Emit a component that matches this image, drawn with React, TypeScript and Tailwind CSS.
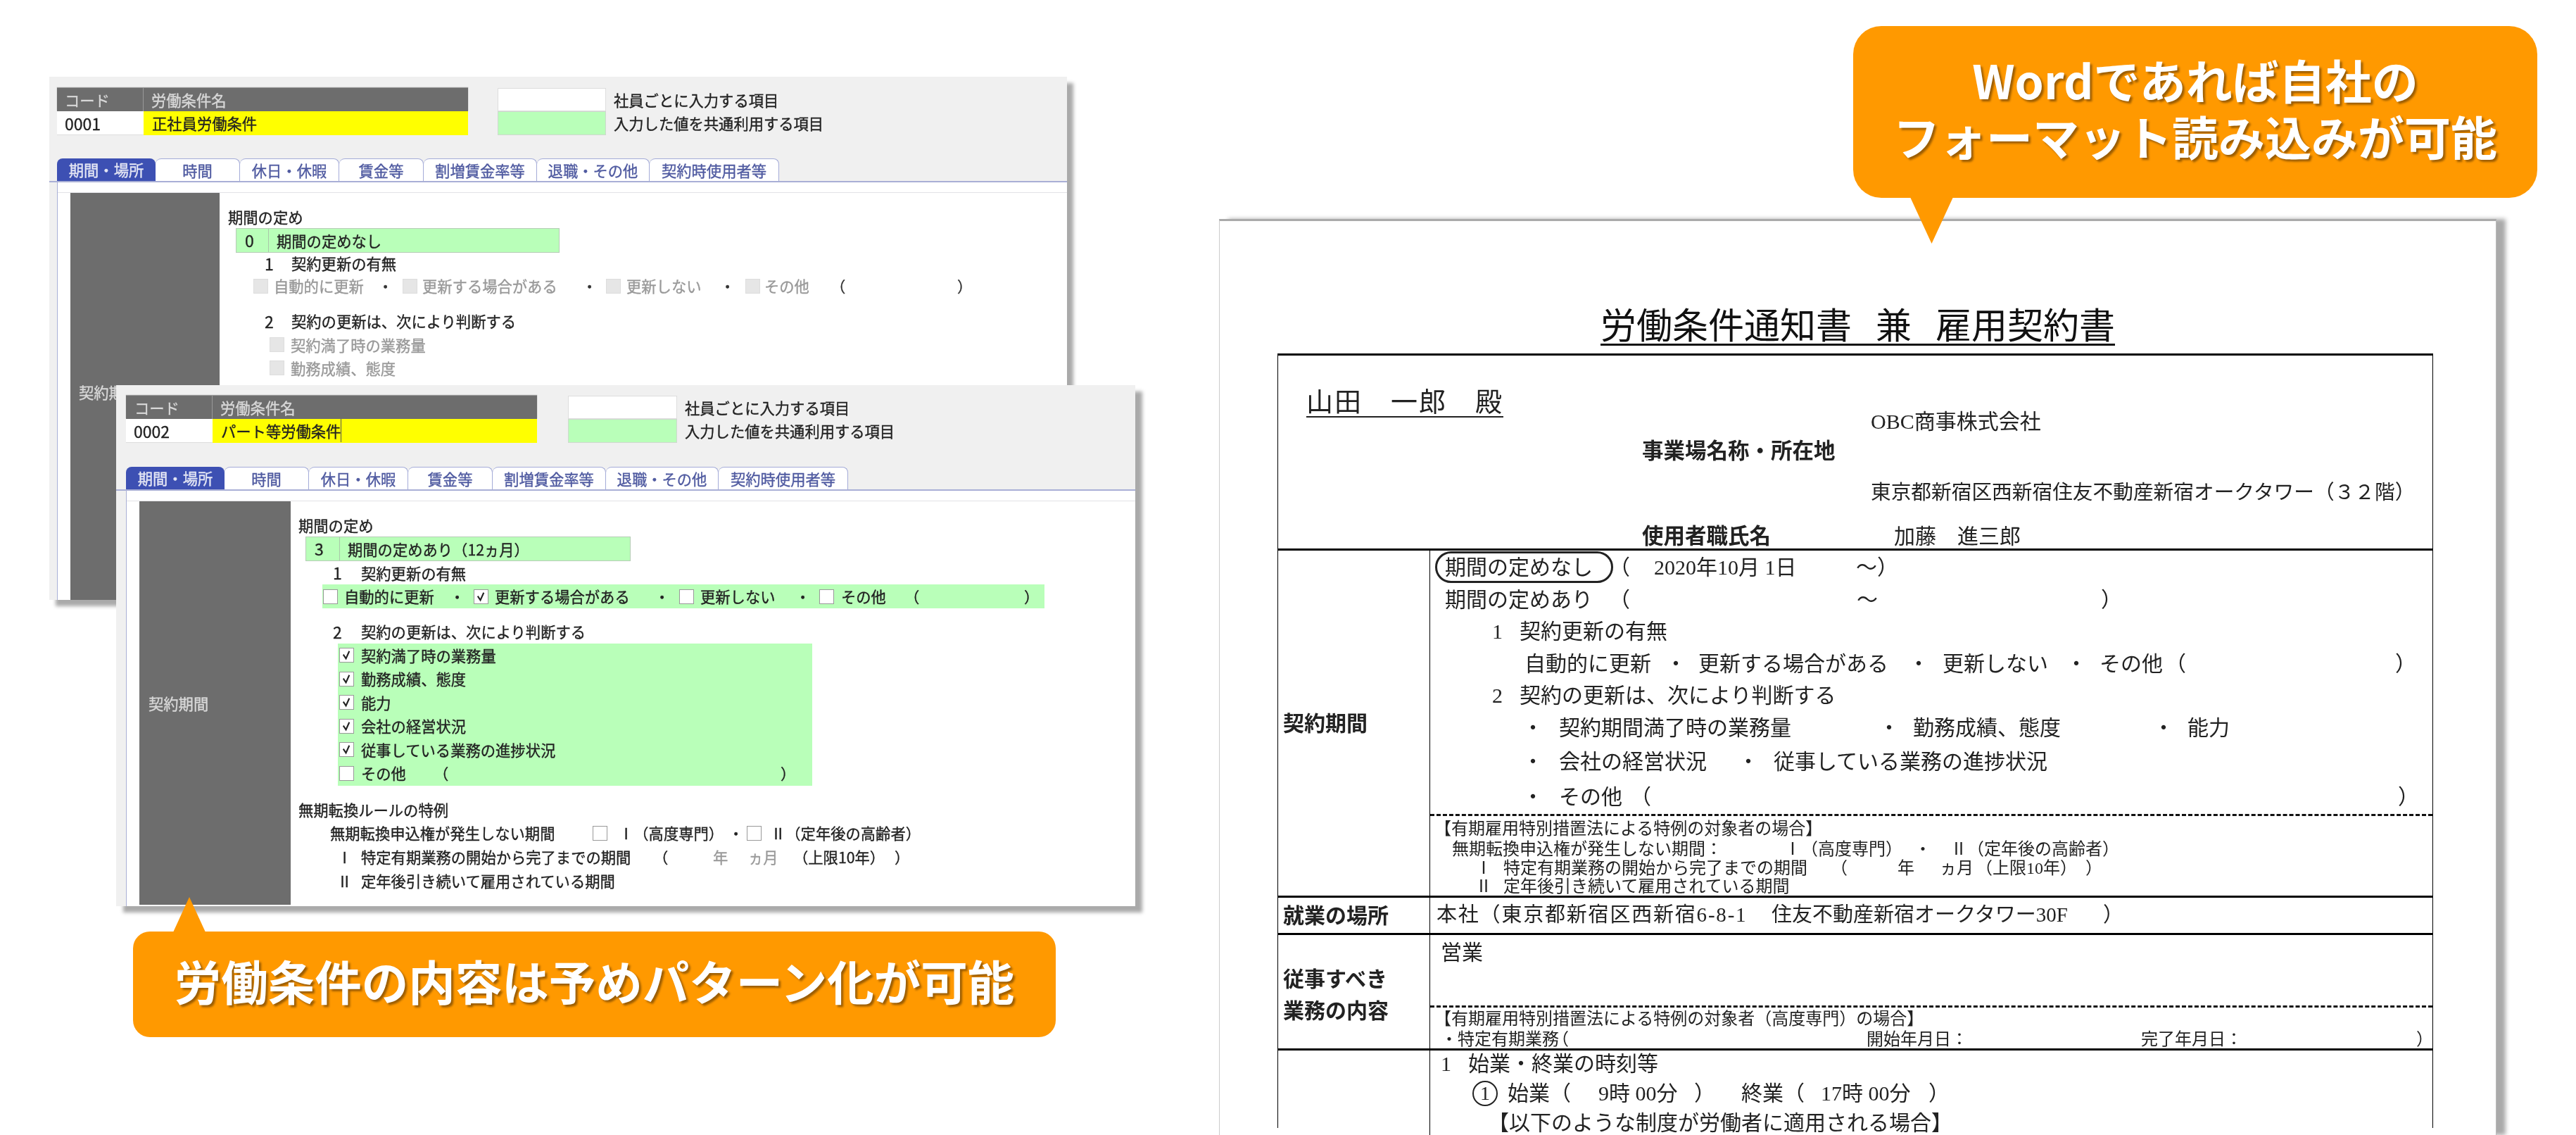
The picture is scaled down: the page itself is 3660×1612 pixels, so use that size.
import React from "react";

const ui = "[font-family:'Noto_Sans_CJK_JP',sans-serif]";
const mincho = "[font-family:'Liberation_Serif','Noto_Sans_CJK_JP',serif]";
const line = "flex items-center whitespace-nowrap [&>span]:shrink-0";

function Cb({ checked, disabled }: { checked?: boolean; disabled?: boolean }) {
  return (
    <span
      className={
        disabled
          ? "w-[21px] h-[21px] bg-[#e6e6e6] border border-[#dddddd] shrink-0"
          : "w-[21px] h-[21px] bg-white border border-[#999999] shrink-0 flex items-center justify-center"
      }
    >
      {checked && (
        <svg viewBox="0 0 20 20" className="w-[19px] h-[19px]">
          <path d="M5 9 L9 15 L14 4" fill="none" stroke="#222" strokeWidth="2.2" />
        </svg>
      )}
    </span>
  );
}

function Sep({ className = "" }: { className?: string }) {
  return <span className={"w-[21px] text-center " + className}>・</span>;
}

function Header({ code, name, narrow, caret }: { code: string; name: string; narrow?: boolean; caret?: boolean }) {
  return (
    <div className={narrow ? "flex mt-[16px] ml-[11px]" : "flex mt-[15px] ml-[14px]"}>
      <div className="w-[584px] shrink-0">
        <div className="flex h-[33px] bg-[#6d6d6d] text-[#d8d8d8] shadow-[0_-1px_1px_#999]">
          <div className={narrow ? "w-[123px] pl-[11px] leading-[33px] border-r border-[#999]" : "w-[123px] pl-[12px] leading-[33px] border-r border-[#999]"}>コード</div>
          <div className="flex-1 pl-[11px] leading-[33px]">労働条件名</div>
        </div>
        <div className="flex h-[34px]">
          <div className="w-[123px] bg-white pl-[11px] leading-[34px] border-b border-[#ddd] text-[#222] text-[23px]">{code}</div>
          <div className="flex-1 bg-[#ffff00] pl-[12px] leading-[34px] text-[#222]">
            <span className={caret ? "border-r border-[#555] pr-0 inline-block h-[33px]" : ""}>{name}</span>
          </div>
        </div>
      </div>
      <div className={narrow ? "ml-[42px] w-[154px] shrink-0" : "ml-[44px] w-[155px] shrink-0"}>
        <div className="h-[33px] bg-white border border-[#ddd]" />
        <div className="h-[34px] bg-[#b9ffb9] border border-[#cfd8cf]" />
      </div>
      <div className="ml-[11px] text-[#222]">
        <div className="h-[33px] leading-[33px]">社員ごとに入力する項目</div>
        <div className="h-[34px] leading-[34px]">入力した値を共通利用する項目</div>
      </div>
    </div>
  );
}

function Tabs({ narrow }: { narrow?: boolean }) {
  const tab = "h-full flex items-center justify-center bg-white border-t border-r border-[#a4abd8] rounded-t-[8px] text-[#4f5aa0]";
  return (
    <div className={narrow ? "flex h-[34px] mt-[33px] pl-[11px] border-b-2 border-[#a9afd6]" : "flex h-[34px] mt-[34px] pl-[14px] border-b-2 border-[#a9afd6]"}>
      <div className="w-[140px] h-full flex items-center justify-center bg-[#3d50b3] text-[#e4e6f4] rounded-t-[8px]">期間・場所</div>
      <div className={tab + " w-[120px]"}>時間</div>
      <div className={tab + " w-[141px]"}>休日・休暇</div>
      <div className={tab + " w-[120px]"}>賃金等</div>
      <div className={tab + " w-[161px]"}>割増賃金率等</div>
      <div className={tab + " w-[160px]"}>退職・その他</div>
      <div className={tab + " w-[184px]"}>契約時使用者等</div>
    </div>
  );
}

function BackPanel() {
  return (
    <section className={"absolute left-[70px] top-[109px] w-[1446px] h-[743px] flex flex-col bg-[#f0f0f0] shadow-[9px_9px_5px_#aaaaaa] text-[21.3px] [-webkit-text-stroke:0.35px] blur-[0.6px] " + ui}>
      <Header code="0001" name="正社員労働条件" narrow />
      <Tabs narrow />
      <div className="flex-1 min-h-0 ml-[11px] bg-white border-l border-[#a9afd6] flex flex-col">
        <div className="h-[15px] shrink-0 border-b border-[#e2e2e6]" />
        <div className="flex-1 min-h-0 flex text-[#222]">
          <div className="w-[212px] ml-[18px] shrink-0 bg-[#6d6d6d] text-[#d8d8d8] pl-[12px] pt-[267px]">契約期間</div>
          <div className="flex-1 min-w-0">
            <div className="mt-[17px] h-[33px] ml-[12px] leading-[33px]">期間の定め</div>
            <div className="ml-[23px] w-[460px] h-[35px] flex bg-[#b9ffb9] border border-[#b6ccb6] leading-[33px]">
              <div className="w-[46px] pl-[12px] border-r border-[#a9c7a9] text-[23px]">0</div>
              <div className="pl-[11px]">期間の定めなし</div>
            </div>
            <div className={line + " h-[30px] ml-[64px]"}>
              <span className="w-[38px] text-[23px]">1</span>
              <span>契約更新の有無</span>
            </div>
            <div className={line + " h-[34px] ml-[48px] text-[#999999]"}>
              <Cb disabled />
              <span className="ml-[8px] w-[148px]">自動的に更新</span>
              <Sep className="text-[#333]" />
              <span className="w-[14px]" />
              <Cb disabled />
              <span className="ml-[7px] w-[227px]">更新する場合がある</span>
              <Sep className="text-[#333]" />
              <span className="w-[13px]" />
              <Cb disabled />
              <span className="ml-[8px] w-[133px]">更新しない</span>
              <Sep className="text-[#333]" />
              <span className="w-[15px]" />
              <Cb disabled />
              <span className="ml-[6px] w-[94px]">その他</span>
              <span className="w-[180px] text-[#333]">（</span>
              <span className="text-[#333]">）</span>
            </div>
            <div className={line + " h-[34px] mt-[16px] ml-[64px]"}>
              <span className="w-[38px] text-[23px]">2</span>
              <span>契約の更新は、次により判断する</span>
            </div>
            <div className={line + " h-[33px] ml-[71px] text-[#999999]"}>
              <Cb disabled />
              <span className="ml-[9px]">契約満了時の業務量</span>
            </div>
            <div className={line + " h-[33px] ml-[71px] text-[#999999]"}>
              <Cb disabled />
              <span className="ml-[9px]">勤務成績、態度</span>
            </div>
          </div>
        </div>
      </div>
    </section>
  );
}

function GreenCheck({ label }: { label: string }) {
  return (
    <div className={line + " h-[33.5px] pl-[2px]"}>
      <Cb checked />
      <span className="ml-[10px]">{label}</span>
    </div>
  );
}

function FrontPanel() {
  return (
    <section className={"absolute left-[165px] top-[547px] w-[1448px] h-[740px] flex flex-col bg-[#f0f0f0] shadow-[10px_9px_5px_#aaaaaa] text-[21.3px] [-webkit-text-stroke:0.35px] blur-[0.6px] " + ui}>
      <Header code="0002" name="パート等労働条件" caret />
      <Tabs />
      <div className="flex-1 min-h-0 ml-[14px] bg-white border-l border-[#a9afd6] flex flex-col">
        <div className="h-[15px] shrink-0 border-b border-[#e2e2e6]" />
        <div className="flex-1 min-h-0 flex text-[#222]">
          <div className="w-[215px] ml-[18px] mb-[2px] shrink-0 bg-[#6d6d6d] text-[#d8d8d8] pl-[13px] flex items-center">契約期間</div>
          <div className="flex-1 min-w-0">
            <div className="mt-[17px] h-[33px] ml-[11px] leading-[33px]">期間の定め</div>
            <div className="ml-[21px] w-[462px] h-[35px] flex bg-[#b9ffb9] border border-[#b6ccb6] leading-[33px]">
              <div className="w-[48px] pl-[12px] border-r border-[#a9c7a9] text-[23px]">3</div>
              <div className="pl-[11px]">期間の定めあり（12ヵ月）</div>
            </div>
            <div className={line + " h-[33px] ml-[60px]"}>
              <span className="w-[40px] text-[23px]">1</span>
              <span>契約更新の有無</span>
            </div>
            <div className={line + " h-[34px] ml-[45px] w-[1026px] bg-[#b9ffb9] pl-[1px]"}>
              <Cb />
              <span className="ml-[9px] w-[150px]">自動的に更新</span>
              <Sep />
              <span className="w-[13px]" />
              <Cb checked />
              <span className="ml-[9px] w-[227px]">更新する場合がある</span>
              <Sep />
              <span className="w-[14px]" />
              <Cb />
              <span className="ml-[9px] w-[135px]">更新しない</span>
              <Sep />
              <span className="w-[13px]" />
              <Cb />
              <span className="ml-[10px] w-[90px]">その他</span>
              <span className="w-[170px]">（</span>
              <span>）</span>
            </div>
            <div className={line + " h-[34px] mt-[16px] ml-[60px]"}>
              <span className="w-[40px] text-[23px]">2</span>
              <span>契約の更新は、次により判断する</span>
            </div>
            <div className="ml-[67px] w-[674px] h-[202px] bg-[#b9ffb9]">
              <GreenCheck label="契約満了時の業務量" />
              <GreenCheck label="勤務成績、態度" />
              <GreenCheck label="能力" />
              <GreenCheck label="会社の経営状況" />
              <GreenCheck label="従事している業務の進捗状況" />
              <div className={line + " h-[33.5px] pl-[2px]"}>
                <Cb />
                <span className="ml-[10px] w-[103px]">その他</span>
                <span className="w-[493px]">（</span>
                <span>）</span>
              </div>
            </div>
            <div className="mt-[17px] h-[33px] ml-[11px] leading-[33px]">無期転換ルールの特例</div>
            <div className={line + " h-[34px] ml-[56px]"}>
              <span className="w-[373px]">無期転換申込権が発生しない期間</span>
              <Cb />
              <span className="ml-[16px] w-[156px]">Ⅰ（高度専門）</span>
              <Sep />
              <span className="w-[5px]" />
              <Cb />
              <span className="ml-[13px]">Ⅱ（定年後の高齢者）</span>
            </div>
            <div className={line + " h-[34px] ml-[66px]"}>
              <span className="w-[34px]">Ⅰ</span>
              <span className="w-[415px]">特定有期業務の開始から完了までの期間</span>
              <span className="w-[85px]">（</span>
              <span className="w-[50px] text-[#999]">年</span>
              <span className="w-[64px] text-[#999]">ヵ月</span>
              <span className="w-[144px]">（上限10年）</span>
              <span>）</span>
            </div>
            <div className={line + " h-[34px] ml-[66px]"}>
              <span className="w-[34px]">Ⅱ</span>
              <span>定年後引き続いて雇用されている期間</span>
            </div>
          </div>
        </div>
      </div>
    </section>
  );
}

function Callout({
  className,
  svgClass,
  points,
  children,
}: {
  className: string;
  svgClass: string;
  points: string;
  children: React.ReactNode;
}) {
  return (
    <div className={className}>
      <svg className={svgClass} viewBox="0 0 100 100" preserveAspectRatio="none">
        <polygon points={points} fill="#ff9900" />
      </svg>
      {children}
    </div>
  );
}

function Doc() {
  return (
    <section className={"absolute left-[1732px] top-[311px] w-[1815px] h-[1301px] overflow-visible bg-white border-l border-[#cccccc] border-t-[3px] border-t-[#aaaaaa] border-r border-r-[#bbbbbb] shadow-[13px_0_6px_#aaaaaa] text-[#222] text-[30px] blur-[0.4px] " + mincho}>
      <div className="flex justify-center pt-[127px]">
        <h1 className="flex gap-[34px] border-b-[3px] border-[#111] text-[51px] leading-[47px] h-[50px] font-normal text-[#111]">
          <span>労働条件通知書</span>
          <span>兼</span>
          <span>雇用契約書</span>
        </h1>
      </div>
      <div className="ml-[82px] mt-[11px] w-[1642px] h-[1100px] border-x border-black">
        {/* 宛先 */}
        <div className="h-[277px] border-t-[3px] border-black flex">
          <div className="w-[517px] shrink-0 pl-[40px] pt-[46px]">
            <span className="text-[38px] leading-[40px] tracking-[2px] border-b-2 border-[#222] inline-block h-[42px]">山田　一郎　殿</span>
          </div>
          <div className="flex-1 pt-[80px] leading-[28px]">
            <div className="pl-[325px] h-[28px]">OBC商事株式会社</div>
            <div className="h-[14px]" />
            <div className="font-bold text-[30.5px] h-[28px]">事業場名称・所在地</div>
            <div className="h-[30px]" />
            <div className="pl-[325px] h-[28px] text-[28.7px]">東京都新宿区西新宿住友不動産新宿オークタワー（３２階）</div>
            <div className="h-[35px]" />
            <div className={line + " h-[28px]"}>
              <span className="font-bold w-[358px] text-[30.5px]">使用者職氏名</span>
              <span>加藤　進三郎</span>
            </div>
          </div>
        </div>
        {/* 契約期間 */}
        <div className="h-[493px] border-t-[3px] border-black flex">
          <div className="w-[216px] shrink-0 border-r border-black flex items-center pl-[7px] font-bold">契約期間</div>
          <div className="flex-1 min-w-0 flex flex-col">
            <div className={line + " h-[47px] ml-[21px]"}>
              <span className="relative w-[233px]">
                期間の定めなし
                <span className="absolute left-[-14px] top-0 w-[253px] h-[45px] rounded-full border-[3px] border-[#222]" />
              </span>
              <span className="w-[64px]">（</span>
              <span className="w-[287px]">2020年10月 1日</span>
              <span className="w-[30px]">～</span>
              <span>）</span>
            </div>
            <div className={line + " h-[45px] ml-[21px]"}>
              <span className="w-[233px]">期間の定めあり</span>
              <span className="w-[352px]">（</span>
              <span className="w-[347px]">～</span>
              <span>）</span>
            </div>
            <div className={line + " h-[46px] ml-[88px]"}>
              <span className="w-[39px]">1</span>
              <span>契約更新の有無</span>
            </div>
            <div className={line + " h-[46px] ml-[134px]"}>
              <span className="w-[200px]">自動的に更新</span>
              <span className="w-[47px]">・</span>
              <span className="w-[298px]">更新する場合がある</span>
              <span className="w-[49px]">・</span>
              <span className="w-[175px]">更新しない</span>
              <span className="w-[48px]">・</span>
              <span className="w-[93px]">その他</span>
              <span className="w-[327px]">（</span>
              <span>）</span>
            </div>
            <div className={line + " h-[45px] ml-[88px]"}>
              <span className="w-[39px]">2</span>
              <span>契約の更新は、次により判断する</span>
            </div>
            <div className={line + " h-[47px] ml-[131px]"}>
              <span className="w-[52px]">・</span>
              <span className="w-[454px]">契約期間満了時の業務量</span>
              <span className="w-[49px]">・</span>
              <span className="w-[341px]">勤務成績、態度</span>
              <span className="w-[49px]">・</span>
              <span>能力</span>
            </div>
            <div className={line + " h-[50px] ml-[131px]"}>
              <span className="w-[52px]">・</span>
              <span className="w-[254px]">会社の経営状況</span>
              <span className="w-[51px]">・</span>
              <span>従事している業務の進捗状況</span>
            </div>
            <div className={line + " h-[50px] ml-[131px]"}>
              <span className="w-[52px]">・</span>
              <span className="w-[101px]">その他</span>
              <span className="w-[1091px]">（</span>
              <span>）</span>
            </div>
            <div className="flex-1 border-t-[3px] border-dashed border-[#111] text-[24px] pt-[2px]">
              <div className={line + " h-[31px] ml-[6px]"}>【有期雇用特別措置法による特例の対象者の場合】</div>
              <div className={line + " h-[28px] ml-[31px]"}>
                <span className="w-[472px]">無期転換申込権が発生しない期間：</span>
                <span className="w-[185px]">Ⅰ（高度専門）</span>
                <span className="w-[51px]">・</span>
                <span>Ⅱ（定年後の高齢者）</span>
              </div>
              <div className={line + " h-[26px] ml-[64px]"}>
                <span className="w-[40px]">Ⅰ</span>
                <span className="w-[465px]">特定有期業務の開始から完了までの期間</span>
                <span className="w-[95px]">（</span>
                <span className="w-[60px]">年</span>
                <span className="w-[51px]">ヵ月</span>
                <span className="w-[156px]">（上限10年）</span>
                <span>）</span>
              </div>
              <div className={line + " h-[26px] ml-[64px]"}>
                <span className="w-[40px]">Ⅱ</span>
                <span>定年後引き続いて雇用されている期間</span>
              </div>
            </div>
          </div>
        </div>
        {/* 就業の場所 */}
        <div className="h-[53px] border-t-[3px] border-black flex">
          <div className="w-[216px] shrink-0 border-r border-black flex items-center pl-[7px] font-bold">就業の場所</div>
          <div className={line + " flex-1 pl-[9px] text-[29px]"}>
            <span className="w-[476px] tracking-[1.8px]">本社（東京都新宿区西新宿6-8-1</span>
            <span className="w-[471px]">住友不動産新宿オークタワー30F</span>
            <span>）</span>
          </div>
        </div>
        {/* 従事すべき業務の内容 */}
        <div className="h-[164px] border-t-[3px] border-black flex">
          <div className="w-[216px] shrink-0 border-r border-black flex flex-col justify-center pl-[7px] pt-[8px] font-bold leading-[45px]">
            <div>従事すべき</div>
            <div>業務の内容</div>
          </div>
          <div className="flex-1 min-w-0 flex flex-col">
            <div className="h-[103px] pl-[15px] pt-[8px] leading-[34px]">営業</div>
            <div className="flex-1 border-t-[3px] border-dashed border-[#111] text-[24px]">
              <div className={line + " h-[31px] ml-[6px]"}>【有期雇用特別措置法による特例の対象者（高度専門）の場合】</div>
              <div className={line + " h-[27px] ml-[15px]"}>
                <span className="w-[158px]">・特定有期業務</span>
                <span className="w-[447px]">（</span>
                <span className="w-[390px]">開始年月日：</span>
                <span className="w-[391px]">完了年月日：</span>
                <span>）</span>
              </div>
            </div>
          </div>
        </div>
        {/* 労働時間 */}
        <div className="border-t-[3px] border-black flex h-[200px] leading-[34px]">
          <div className="w-[216px] shrink-0 border-r border-black" />
          <div className="flex-1 min-w-0">
            <div className={line + " h-[37px] ml-[15px]"}>
              <span className="w-[39px]">1</span>
              <span>始業・終業の時刻等</span>
            </div>
            <div className={line + " h-[47px] ml-[60px]"}>
              <span className="w-[36px] h-[36px] rounded-full border-2 border-[#222] flex items-center justify-center text-[28px] mr-[14px]">1</span>
              <span className="w-[129px]">始業（</span>
              <span className="w-[136px]">9時 00分</span>
              <span className="w-[67px]">）</span>
              <span className="w-[113px]">終業（</span>
              <span className="w-[153px]">17時 00分</span>
              <span>）</span>
            </div>
            <div className={line + " h-[37px] ml-[82px]"}>【以下のような制度が労働者に適用される場合】</div>
          </div>
        </div>
      </div>
    </section>
  );
}

export default function App() {
  return (
    <div className="relative w-[3660px] h-[1612px] bg-white overflow-hidden">
      <BackPanel />
      <FrontPanel />
      <Doc />
      <Callout
        className="absolute left-[189px] top-[1323px] w-[1311px] h-[150px] rounded-[24px] bg-[#ff9900] flex items-center justify-center"
        svgClass="absolute left-[57px] top-[-49px] w-[46px] h-[50px]"
        points="50,0 100,100 0,100"
      >
        <span className={"text-white font-bold text-[66.5px] leading-[80px] pb-[12px] [text-shadow:3px_3px_3px_rgba(0,0,0,0.4)] " + ui}>
          労働条件の内容は予めパターン化が可能
        </span>
      </Callout>
      <Callout
        className="absolute left-[2633px] top-[37px] w-[972px] h-[244px] rounded-[40px] bg-[#ff9900] flex flex-col items-center pt-[35px]"
        svgClass="absolute left-[81px] top-[243px] w-[61px] h-[66px]"
        points="0,0 100,0 50,100"
      >
        <span className={"text-white font-bold text-[66px] leading-[80px] [text-shadow:3px_3px_3px_rgba(0,0,0,0.4)] " + ui}>
          Wordであれば自社の
        </span>
        <span className={"text-white font-bold text-[66px] leading-[80px] [text-shadow:3px_3px_3px_rgba(0,0,0,0.4)] " + ui}>
          フォーマット読み込みが可能
        </span>
      </Callout>
    </div>
  );
}
